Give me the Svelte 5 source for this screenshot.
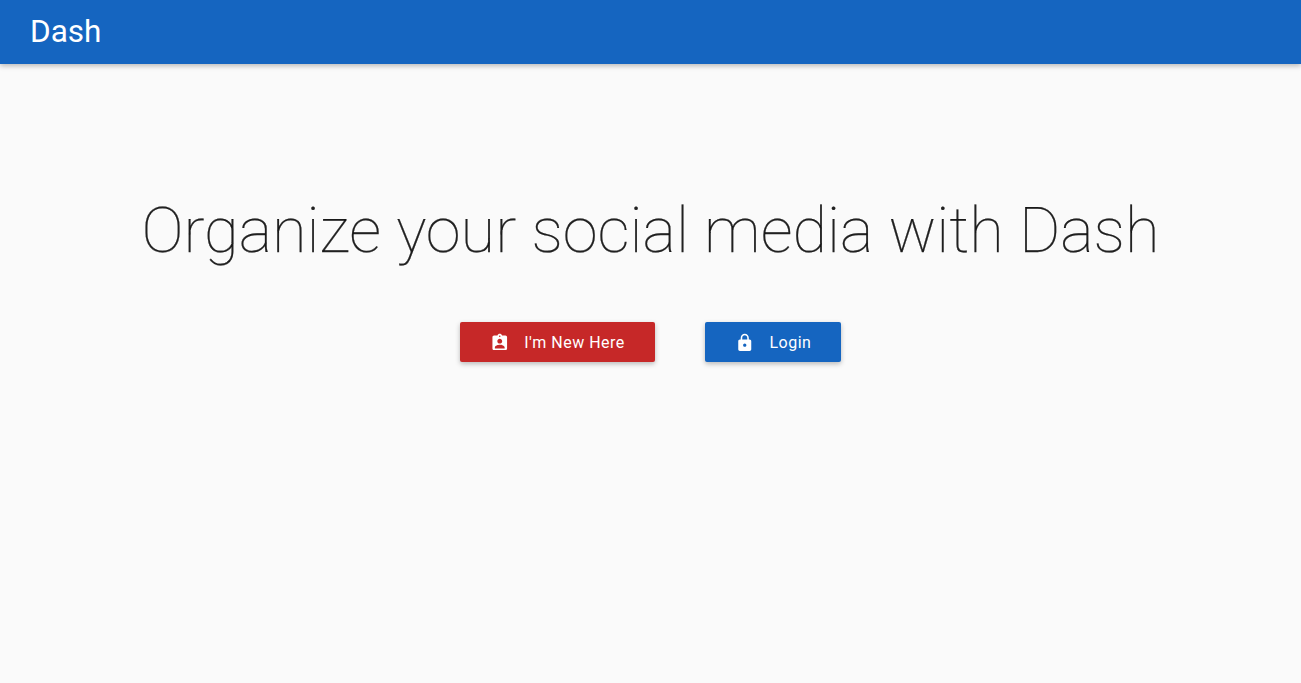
<script lang="ts">
  interface Action {
    label: string;
    tone: 'error' | 'primary';
    icon: string;
  }

  const actions: Action[] = [
    {
      label: "I'm New Here",
      tone: 'error',
      icon: 'M19 3h-4.18C14.4 1.84 13.3 1 12 1s-2.4.84-2.82 2H5c-1.1 0-2 .9-2 2v14c0 1.1.9 2 2 2h14c1.1 0 2-.9 2-2V5c0-1.1-.9-2-2-2zm-7 0c.55 0 1 .45 1 1s-.45 1-1 1-1-.45-1-1 .45-1 1-1zm0 4c1.66 0 3 1.34 3 3s-1.34 3-3 3-3-1.34-3-3 1.34-3 3-3zm6 12H6v-1.4c0-2 4-3.1 6-3.1s6 1.1 6 3.1V19z',
    },
    {
      label: 'Login',
      tone: 'primary',
      icon: 'M18 8h-1V6c0-2.76-2.24-5-5-5S7 3.24 7 6v2H6c-1.1 0-2 .9-2 2v10c0 1.1.9 2 2 2h12c1.1 0 2-.9 2-2V10c0-1.1-.9-2-2-2zm-6 9c-1.1 0-2-.9-2-2s.9-2 2-2 2 .9 2 2-.9 2-2 2zm3.1-9H8.9V6c0-1.71 1.39-3.1 3.1-3.1 1.71 0 3.1 1.39 3.1 3.1v2z',
    },
  ];
</script>

<div class="app">
  <header class="toolbar">
    <span class="brand">Dash</span>
  </header>

  <main>
    <h1>Organize your social media with Dash</h1>
    <div class="actions">
      {#each actions as action}
        <button type="button" class={action.tone}>
          <svg viewBox="0 0 24 24" aria-hidden="true"><path d={action.icon} /></svg>
          {action.label}
        </button>
      {/each}
    </div>
  </main>
</div>

<style>
  :global(body) {
    background-color: #fafafa;
  }
  .app {
    min-height: 100vh;
    font-family: Roboto, sans-serif;
    color: rgba(0, 0, 0, 0.87);
  }
  .toolbar {
    display: flex;
    align-items: center;
    height: 64px;
    padding: 0 30px;
    box-sizing: border-box;
    color: #fff;
    background-color: #1565c0;
  }
  .toolbar,
  button {
    box-shadow: 0 2px 5px 0 rgba(0, 0, 0, 0.26);
  }
  .brand {
    font-size: 31.5px;
    line-height: 1;
  }
  main {
    padding-top: 134px;
    text-align: center;
  }
  h1 {
    margin: 0;
    font-size: 63.15px;
    font-weight: 100;
    line-height: 64px;
    -webkit-text-stroke: 0.25px;
  }
  .actions {
    display: flex;
    justify-content: center;
    gap: 50px;
    margin-top: 60px;
  }
  button {
    display: flex;
    align-items: center;
    height: 40px;
    padding: 2px 30px 0;
    border: 0;
    border-radius: 2px;
    color: #fff;
    font: 400 16px/1 Roboto, sans-serif;
    letter-spacing: 0.5px;
    cursor: pointer;
  }
  .error {
    background-color: #c62828;
  }
  .primary {
    background-color: #1565c0;
  }
  svg {
    width: 19.5px;
    height: 19.5px;
    margin-right: 15.2px;
    fill: currentColor;
  }
</style>
